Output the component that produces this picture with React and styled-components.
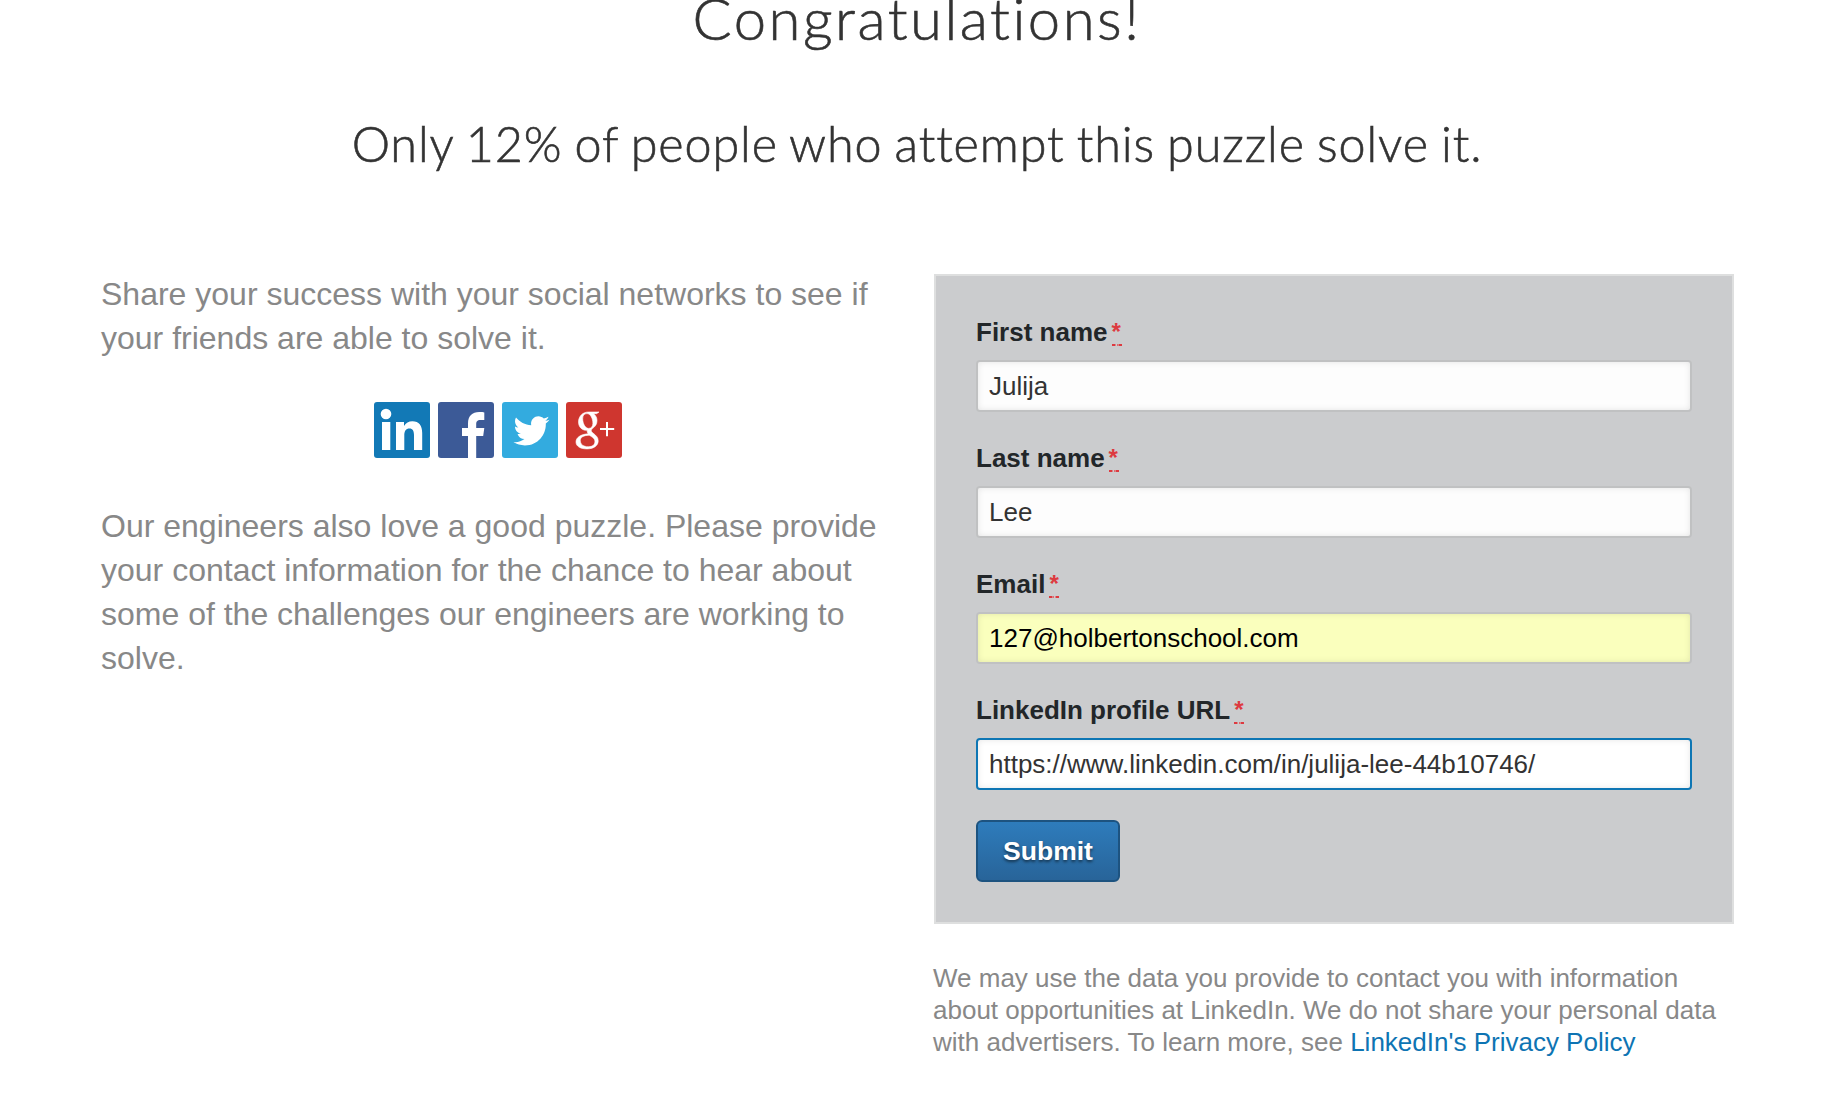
import React from "react";
import styled, { createGlobalStyle, css } from "styled-components";

const GlobalStyle = createGlobalStyle`
  *, *::before, *::after { box-sizing: border-box; }
  body {
    margin: 0;
    background: #fff;
    color: #333;
    font-family: "Liberation Sans", Helvetica, Arial, sans-serif;
    overflow: hidden;
  }
`;

const Page = styled.main`
  height: 1094px;
  overflow: hidden;
  display: flex;
  flex-direction: column;
`;

const Header = styled.header`
  height: 274px;
  flex: none;
  display: flex;
  flex-direction: column;
  align-items: center;
  font-family: Lato, "Open Sans", sans-serif;
  color: #333;
  padding-left: 4px;
  -webkit-text-stroke: 0.6px #333;
`;

const Title = styled.h1`
  margin: -17px 0 0;
  font-size: 58px;
  line-height: 70px;
  font-weight: 300;
  letter-spacing: 2.5px;
  white-space: nowrap;
`;

const Subtitle = styled.h2`
  margin: 60px 0 0;
  font-size: 48.5px;
  line-height: 60px;
  font-weight: 300;
  letter-spacing: 0.9px;
  word-spacing: -2px;
  white-space: nowrap;
`;

const Columns = styled.div`
  display: grid;
  grid-template-columns: 797px 802px;
  gap: 36px;
  padding-left: 101px;
`;

const Story = styled.section`
  display: flex;
  flex-direction: column;
  margin-top: -2px;
`;

const Copy = styled.p`
  margin: 0;
  font-size: 32px;
  line-height: 44px;
  color: #888;
  white-space: nowrap;
`;

const ShareRow = styled.div`
  display: flex;
  gap: 8px;
  margin: 42px 0 46px 273px;
`;

const ShareLink = styled.a`
  display: block;
  width: 56px;
  height: 56px;
  border-radius: 3px;
  overflow: hidden;
  background: ${(p) => p.$color};

  svg { display: block; }
`;

const Panel = styled.form`
  width: 800px;
  height: 650px;
  padding: 38px 40px 40px;
  border: 2px solid #dedfdf;
  background: #cbccce;
`;

const Field = styled.div`
  height: 126px;
  display: flex;
  flex-direction: column;
`;

const Label = styled.label`
  display: flex;
  height: 46px;
  padding-top: 2px;
  font-size: 26px;
  line-height: 32px;
  font-weight: 700;
  color: #222629;
  white-space: nowrap;
`;

const Required = styled.abbr`
  width: 10px;
  height: 30px;
  margin-left: 4px;
  font-size: 24px;
  color: #dd3a40;
  text-decoration: none;
  background: linear-gradient(
      90deg,
      #dd3a40 0 3px,
      #d7868a 3px 4px,
      #cbccce 4px 4.5px,
      #dd6b70 4.5px 5.5px,
      #cbccce 5.5px 6px,
      #d7868a 6px 7px,
      #dd3a40 7px 10px
    )
    0 100% / 10px 2px no-repeat;
`;

const Input = styled.input`
  width: 716px;
  height: 52px;
  padding: 0 10px 0 11px;
  border: 2px solid #c0c1c2;
  border-radius: 4px;
  outline: none;
  background: #fdfdfd;
  color: #333;
  font: 26px/32px "Liberation Sans", Helvetica, Arial, sans-serif;
  box-shadow: inset 0 0 6px rgba(0, 0, 0, 0.1);

  ${(p) => p.$state === "filled" && css`
    background: #faffbd;
    color: #000;
  `}
  ${(p) => p.$state === "active" && css`
    background: #fff;
    border-color: #0e76b4;
  `}
`;

const Submit = styled.button`
  display: block;
  width: 144px;
  height: 62px;
  margin-top: 2px;
  padding: 0;
  border: 2px solid #1d5380;
  border-radius: 6px;
  background: linear-gradient(#2e7cbc, #286499);
  color: #fff;
  font: 700 26.500px/32px "Liberation Sans", Helvetica, Arial, sans-serif;
  text-shadow: 0 2px 3px rgba(0, 0, 0, 0.5);
`;

const Notice = styled.p`
  margin: 38px 0 0 -1px;
  font-size: 26px;
  line-height: 32px;
  color: #888;
  white-space: nowrap;
`;

const PolicyLink = styled.a`
  color: #0e74b3;
  text-decoration: none;
`;

const Logo = ({ children }) => (
  <svg width="56" height="56" viewBox="0 0 56 56" fill="#fff">{children}</svg>
);

const networks = [
  {
    name: "LinkedIn",
    color: "#1279b6",
    art: (
      <>
        <circle cx="12" cy="12" r="5.3" />
        <path d="M8 20h8.300v28H8zM22 20h8v4c1.800-3 4.700-4.700 8.400-4.700C45 19.300 48.200 23.500 48.200 31v17H40V33c0-4-1.200-6.600-4.600-6.600S30.300 29 30.300 33v15H22z" />
      </>
    ),
  },
  {
    name: "Facebook",
    color: "#3c5a97",
    art: <path d="M30 56V34h-6v-8h6v-4.500C30 14 34.200 10 41.200 10c2.300 0 4.200.2 5.100.4V18h-3.700c-3.600 0-4.400 1.600-4.400 4.400V26h8.100l-1.100 8h-7v22z" />,
  },
  {
    name: "Twitter",
    color: "#33abdf",
    art: (
      <path transform="translate(11.500 10.800) scale(.0703)" d="M459.370 151.716c.325 4.548.325 9.097.325 13.645 0 138.720-105.583 298.558-298.558 298.558-59.452 0-114.680-17.219-161.137-47.106 8.447.974 16.568 1.299 25.340 1.299 49.055 0 94.213-16.568 130.274-44.832-46.132-.975-84.792-31.188-98.112-72.772 6.498.974 12.995 1.624 19.818 1.624 9.421 0 18.843-1.300 27.614-3.573-48.081-9.747-84.143-51.980-84.143-102.985v-1.299c13.969 7.797 30.214 12.670 47.431 13.319-28.264-18.843-46.781-51.005-46.781-87.391 0-19.492 5.197-37.360 14.294-52.954 51.655 63.675 129.300 105.258 216.365 109.807-1.624-7.797-2.599-15.918-2.599-24.040 0-57.828 46.782-104.934 104.934-104.934 30.213 0 57.502 12.670 76.670 33.137 23.715-4.548 46.456-13.320 66.599-25.340-7.798 24.366-24.366 44.833-46.132 57.827 21.117-2.273 41.584-8.122 60.426-16.243-14.292 20.791-32.161 39.308-52.628 54.253z" />
    ),
  },
  {
    name: "Google+",
    color: "#cf362f",
    art: (
      <>
        <path stroke="#fff" strokeWidth=".6" fillRule="evenodd" d="M22.500 10H33l-2.400 1.700h-3.100c2.600 1.900 3.500 4.400 3.500 7 0 3.800-2 5.800-4 7.400-1.400 1.200-1.700 1.700-1.700 2.600 0 1.100 1.300 2 2.600 3.100 2.300 1.800 4.300 3.700 4.300 7.100 0 4.500-4.300 8-11.300 8-6.400 0-10.900-2.500-10.900-6.900 0-4.700 5-7.800 12.300-8.200-.9-1.100-1.300-2-1.100-3.500-5.200.3-8.700-3.300-8.700-8.300C12.500 14 17 10 22.500 10zM21 11.600c-3 0-4.300 2.200-4.300 5.200 0 4.500 2.400 9.600 6 9.600 2.700 0 4.200-2 4.200-5.100 0-4.300-2.300-9.700-5.900-9.700zM23.200 33.200c-5.700.2-8.900 2-8.900 5.500 0 3.700 3.200 6 8 6 4.500 0 6.600-2.100 6.600-5.100 0-2.800-1.700-4-5.700-6.400z" />
        <path d="M40 20h2v6h6.200v2H42v6.200h-2V28h-6v-2h6z" />
      </>
    ),
  },
];

const fields = [
  { label: "First name", value: "Julija" },
  { label: "Last name", value: "Lee" },
  { label: "Email", value: "127@holbertonschool.com", state: "filled" },
  { label: "LinkedIn profile URL", value: "https://www.linkedin.com/in/julija-lee-44b10746/", state: "active" },
];

export default function App() {
  return (
    <>
      <GlobalStyle />
      <Page>
        <Header>
          <Title>Congratulations!</Title>
          <Subtitle>Only 12% of people who attempt this puzzle solve it.</Subtitle>
        </Header>
        <Columns>
          <Story>
            <Copy>
              Share your success with your social networks to see if<br />
              your friends are able to solve it.
            </Copy>
            <ShareRow>
              {networks.map((n) => (
                <ShareLink key={n.name} $color={n.color} aria-label={n.name}>
                  <Logo>{n.art}</Logo>
                </ShareLink>
              ))}
            </ShareRow>
            <Copy>
              Our engineers also love a good puzzle. Please provide<br />
              your contact information for the chance to hear about<br />
              some of the challenges our engineers are working to<br />
              solve.
            </Copy>
          </Story>
          <section>
            <Panel>
              {fields.map((f) => (
                <Field key={f.label}>
                  <Label>{f.label}<Required>*</Required></Label>
                  <Input $state={f.state} defaultValue={f.value} spellCheck={false} />
                </Field>
              ))}
              <Submit type="button">Submit</Submit>
            </Panel>
            <Notice>
              We may use the data you provide to contact you with information<br />
              about opportunities at LinkedIn. We do not share your personal data<br />
              with advertisers. To learn more, see <PolicyLink>LinkedIn's Privacy Policy</PolicyLink>
            </Notice>
          </section>
        </Columns>
      </Page>
    </>
  );
}
